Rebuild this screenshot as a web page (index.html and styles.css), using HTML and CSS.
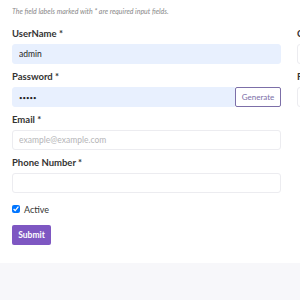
FILE: index.html
```html
<!DOCTYPE html>
<html lang="en">
<head>
    <meta charset="UTF-8">
    <meta name="viewport" content="width=device-width, initial-scale=1.0">
    <title>Add User</title>
    <link rel="stylesheet" href="styles.css">
</head>
<body>
    <div class="card">
        <p class="hint">The field labels marked with * are required input fields.</p>
        <form class="form-grid">
            <div class="col">
                <div class="field">
                    <label>UserName *</label>
                    <input type="text" class="autofill" value="admin">
                </div>
                <div class="field">
                    <label>Password *</label>
                    <div class="input-group">
                        <input type="password" class="autofill pass" value="admin">
                        <button type="button" class="btn-outline">Generate</button>
                    </div>
                </div>
                <div class="field">
                    <label>Email *</label>
                    <input type="email" placeholder="example@example.com">
                </div>
                <div class="field">
                    <label>Phone Number *</label>
                    <input type="text">
                </div>
                <div class="check">
                    <input type="checkbox" checked id="active">
                    <label for="active">Active</label>
                </div>
                <div>
                    <button type="submit" class="btn-primary">Submit</button>
                </div>
            </div>
            <div class="col side">
                <div class="field">
                    <label>C</label>
                    <input type="text">
                </div>
                <div class="field">
                    <label>P</label>
                    <input type="text">
                </div>
            </div>
        </form>
    </div>
</body>
</html>
```

FILE: styles.css
```css
body {
    margin: 0;
    padding: 0;
    font-family: Lato, "Noto Sans", sans-serif;
    background-color: #f7f7fa;
    color: #333;
    overflow: hidden;
}
.card {
    background: #ffffff;
    padding: 6px 0 18px 12px;
    box-shadow: 0 4px 8px rgba(0, 0, 0, 0.02);
}
.hint {
    margin: 0 0 11px 0;
    height: 10px;
    line-height: 10px;
    font-size: 7px;
    font-style: italic;
    color: #8a8a8a;
}
.form-grid {
    display: grid;
    grid-template-columns: 269px 269px;
    column-gap: 16px;
}
.col {
    display: flex;
    flex-direction: column;
}
.field {
    display: flex;
    flex-direction: column;
    margin-bottom: 6px;
}
.field label {
    font-size: 9.5px;
    font-weight: 700;
    color: #333;
    height: 13px;
    line-height: 13px;
    margin-bottom: 4px;
}
input[type="text"],
input[type="password"],
input[type="email"] {
    box-sizing: border-box;
    height: 20px;
    width: 100%;
    border: 1px solid #ececf0;
    border-radius: 3px;
    padding: 0 6px;
    font-family: inherit;
    font-size: 8.5px;
    color: #222;
    background: #fff;
}
input.pass {
    font-size: 6px;
}
input::placeholder {
    color: #b5b5b8;
}
input.autofill {
    background-color: #e8f0fe;
    border-color: #e8f0fe;
}
.input-group {
    display: flex;
}
.input-group input {
    flex: 1;
    border-radius: 3px 0 0 3px;
}
.btn-outline {
    height: 20px;
    width: 46px;
    padding: 0;
    border: 1px solid #7c6fa8;
    border-radius: 2px;
    background: #fff;
    color: #7c6fa8;
    font-family: inherit;
    font-size: 8px;
}
.check {
    display: flex;
    align-items: center;
    gap: 4px;
    margin: 4px 0 7px 0;
    height: 12px;
}
.check input {
    margin: 0;
    width: 8px;
    height: 8px;
}
.check label {
    font-size: 9px;
    color: #333;
}
.btn-primary {
    height: 20px;
    width: 39px;
    padding: 0;
    border: none;
    border-radius: 2px;
    background-color: #7e57c2;
    color: #fff;
    font-family: inherit;
    font-size: 8.5px;
    font-weight: 700;
}
```
